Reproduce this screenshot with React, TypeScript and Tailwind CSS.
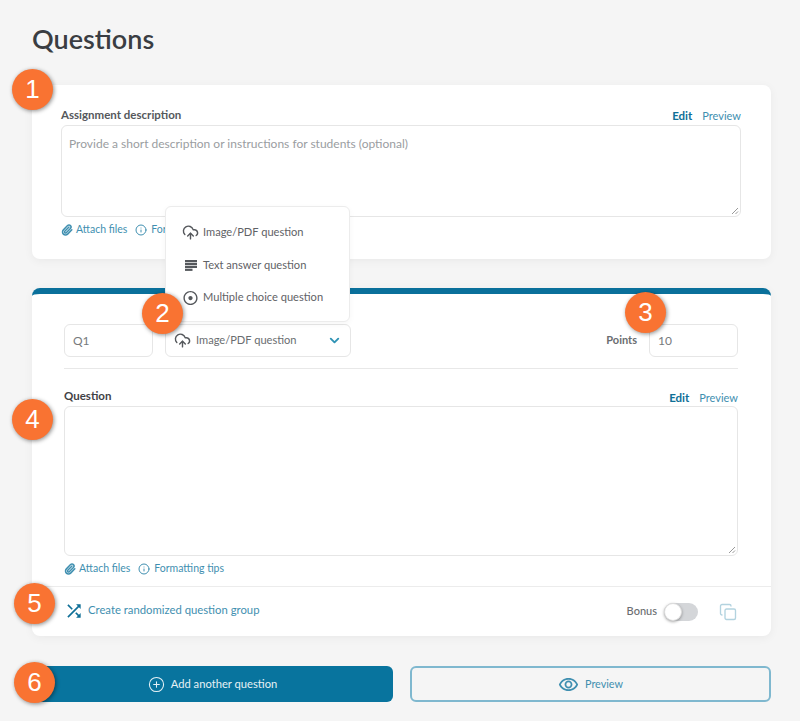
import type { ReactNode } from "react";
import { ChevronDown, CirclePlus, CloudUpload, Copy, Info, Paperclip } from "lucide-react";
import { MdAdjust, MdOutlineRemoveRedEye, MdShuffle } from "react-icons/md";

const badges = [
  { n: 1, className: "left-[12px] top-[69px]" },
  { n: 2, className: "left-[142px] top-[293px]" },
  { n: 3, className: "left-[625px] top-[292px]" },
  { n: 4, className: "left-[12px] top-[399px]" },
  { n: 5, className: "left-[14px] top-[583px]" },
  { n: 6, className: "left-[14px] top-[662px]" },
];

function EditTabs() {
  return (
    <div className="flex gap-[10px] text-[11px] leading-4 text-[#3f8fb0]">
      <span className="text-[11.5px] font-bold text-[#0f6f97]">Edit</span>
      <span>Preview</span>
    </div>
  );
}

function ResizeHandle() {
  return (
    <svg className="absolute bottom-[1px] right-[1px] h-[8px] w-[8px] text-[#999]" viewBox="0 0 8 8" fill="none" stroke="currentColor">
      <path d="M1 7 7 1M4.5 7 7 4.5" />
    </svg>
  );
}

function TextLinesIcon() {
  return (
    <svg className="h-[11px] w-[12px]" viewBox="0 0 12 11" fill="currentColor">
      <rect width="12" height="2.2" />
      <rect y="2.9" width="12" height="2.2" />
      <rect y="5.8" width="12" height="2.2" />
      <rect y="8.7" width="7.5" height="2.2" />
    </svg>
  );
}

function FileLinks({ clipped }: { clipped?: boolean }) {
  return (
    <div className="flex h-4 items-center text-[10.5px] text-[#3f8fb0]">
      <Paperclip className="mr-[3px] h-[12px] w-[12px]" strokeWidth={3} />
      <span>Attach files</span>
      <Info className="ml-[8px] mr-[4px] h-[12px] w-[12px]" strokeWidth={2} />
      <span>{clipped ? "Formatting" : "Formatting tips"}</span>
    </div>
  );
}

function MenuItem({ icon, label }: { icon: ReactNode; label: string }) {
  return (
    <div className="flex h-[32.7px] items-center gap-[4px] pl-[16px] text-[11.1px] text-[#5f6266]">
      <span className="flex w-[17px] justify-center text-[18px] text-[#55585c]">{icon}</span>
      {label}
    </div>
  );
}

export default function App() {
  return (
    <div className="relative h-[721px] w-[800px] overflow-hidden bg-[#f5f5f5] font-['Lato',sans-serif] text-[#444]">
      <div className="pl-[32px] pr-[29px] pt-[23px]">
        <h1 className="text-[27px] font-semibold leading-[32px] text-[#3a3d42]">Questions</h1>

        <section className="mt-[30px] h-[174px] rounded-lg bg-white pl-[29px] pr-[30px] pt-[23px] shadow-[0_2px_10px_rgba(0,0,0,0.05)]">
          <div className="flex h-[17px] items-start justify-between">
            <span className="text-[11.5px] font-bold leading-[14px] text-[#55585c]">Assignment description</span>
            <EditTabs />
          </div>
          <div className="relative h-[92px] rounded-md border border-[#e6e6e6] px-[7px] py-[10px] text-[12px] leading-4 text-[#9a9da1]">
            Provide a short description or instructions for students (optional)
            <ResizeHandle />
          </div>
          <div className="mt-[5px]">
            <FileLinks clipped />
          </div>
        </section>

        <section className="mt-[29px] h-[348px] rounded-lg border-t-[6px] border-[#0a709b] bg-white shadow-[0_2px_10px_rgba(0,0,0,0.05)]">
          <div className="pl-[32px] pr-[33px] pt-[30px]">
            <div className="flex items-center border-b border-[#e8e8e8] pb-[11px]">
              <div className="flex h-[33px] w-[89px] items-center rounded-md border border-[#e6e6e6] px-[8px] text-[12px] text-[#777a7d]">Q1</div>
              <div className="ml-[12px] flex h-[33px] w-[186px] items-center rounded-md border border-[#e6e6e6] pl-[8px] pr-[8px] text-[11.1px] text-[#6a6d70]">
                <CloudUpload className="mr-[5px] h-[17px] w-[17px] text-[#55585c]" strokeWidth={2} />
                Image/PDF question
                <ChevronDown className="ml-auto h-[15px] w-[15px] text-[#2f93b5]" strokeWidth={3} />
              </div>
              <span className="ml-auto text-[11px] font-bold text-[#6a6d70]">Points</span>
              <div className="ml-[12px] flex h-[33px] w-[89px] items-center rounded-md border border-[#e6e6e6] px-[8px] text-[12px] text-[#777a7d]">10</div>
            </div>
            <div className="mt-[19px] flex h-[18px] items-start justify-between">
              <span className="text-[11.5px] font-bold leading-[15px] text-[#3f4246]">Question</span>
              <div className="pt-[2px]">
                <EditTabs />
              </div>
            </div>
            <div className="relative h-[150px] rounded-md border border-[#e6e6e6]">
              <ResizeHandle />
            </div>
            <div className="mt-[5px]">
              <FileLinks />
            </div>
          </div>
          <div className="mt-[9px] flex h-[50px] items-center border-t border-[#ececec] pl-[32px] pr-[34px]">
            <MdShuffle className="-mt-[1px] text-[20px] text-[#0f6f97]" />
            <span className="-mt-[2px] ml-[4px] text-[11.3px] text-[#3f8fb0]">Create randomized question group</span>
            <span className="ml-auto text-[11px] font-medium text-[#6a6d70]">Bonus</span>
            <div className="ml-[7px] flex h-[18px] w-[34px] items-center rounded-full bg-[#d4d6d9]">
              <span className="h-[18px] w-[18px] rounded-full border border-[#ddd] bg-white shadow-[0_1px_3px_rgba(0,0,0,0.35)]" />
            </div>
            <Copy className="ml-[21px] h-[18px] w-[18px] text-[#b3d3df]" strokeWidth={1.8} />
          </div>
        </section>

        <div className="mt-[30px] flex gap-[17px]">
          <button className="flex h-[36px] w-[361px] items-center justify-center gap-[6px] rounded-md bg-[#08749e] text-[11.2px] text-[#e6f1f5]">
            <CirclePlus className="h-[17px] w-[17px]" strokeWidth={1.5} />
            Add another question
          </button>
          <button className="flex h-[36px] w-[361px] items-center justify-center gap-[6px] rounded-md border-2 border-[#7fb8cf] text-[10.8px] text-[#3f8fb0]">
            <MdOutlineRemoveRedEye className="text-[21px]" />
            Preview
          </button>
        </div>
      </div>

      <div className="absolute left-[165px] top-[206px] h-[116px] w-[185px] rounded-md border border-[#ececec] bg-white pt-[9px] shadow-[0_2px_6px_rgba(0,0,0,0.04)]">
        <MenuItem icon={<CloudUpload className="h-[17px] w-[17px]" strokeWidth={2} />} label="Image/PDF question" />
        <MenuItem icon={<TextLinesIcon />} label="Text answer question" />
        <MenuItem icon={<MdAdjust />} label="Multiple choice question" />
      </div>

      {badges.map((b) => (
        <div
          key={b.n}
          className={`absolute flex h-[41px] w-[41px] items-center justify-center rounded-full bg-[#f97332] font-['Liberation_Sans',sans-serif] text-[26px] text-white shadow-[1px_1px_4px_rgba(0,0,0,0.45)] ${b.className}`}
        >
          {b.n}
        </div>
      ))}
    </div>
  );
}
